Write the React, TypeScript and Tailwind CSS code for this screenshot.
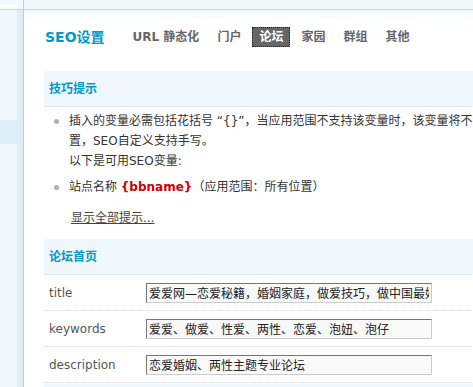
const font = "font-['DejaVu_Sans','Noto_Sans_CJK_SC',sans-serif]";

const tabs = ["URL 静态化", "门户", "论坛", "家园", "群组", "其他"];

const rows = [
  { label: "title", value: "爱爱网—恋爱秘籍，婚姻家庭，做爱技巧，做中国最好的两性网站" },
  { label: "keywords", value: "爱爱、做爱、性爱、两性、恋爱、泡妞、泡仔" },
  { label: "description", value: "恋爱婚姻、两性主题专业论坛" },
];

function Sidebar() {
  return (
    <div className="w-[24px] shrink-0 flex flex-col border-r border-[#b7d2df]">
      <div className="h-[10px] border-b border-[#c5dbe8] bg-[#f2f9fd] flex flex-col">
        <div className="h-[5px]" />
        <div className="h-[2px] w-[17px] bg-white" />
      </div>
      <div className="flex-1 flex">
        <div className="w-[17px] bg-[#f2f9fd] flex flex-col">
          <div className="h-[110px]" />
          <div className="h-[24px] bg-[#ddeef9]" />
        </div>
        <div className="flex-1 bg-[#ddeef9]" />
      </div>
    </div>
  );
}

function SectionHeader({ title }: { title: string }) {
  return (
    <div className="h-[36px] pl-[5px] flex items-center bg-[#f0f7fd] border-b border-dotted border-[#c5dde9]">
      <span className="text-[12px] font-bold text-[#0099cc]">{title}</span>
    </div>
  );
}

export default function App() {
  return (
    <div className={`w-[473px] h-[387px] overflow-hidden flex bg-white text-[#333] ${font}`}>
      <Sidebar />
      <div className="flex-1 min-w-0 overflow-hidden">
        <div className="h-[10px] bg-[#f2f9fd] border-b border-[#c5dbe8] overflow-hidden">
          <div className="-mt-[14px] pl-[10px] text-[12px] leading-[17px] whitespace-nowrap flex gap-[40px]">
            <span>首页 &nbsp;设置</span>
            <span>全局 <span className="text-[#2366a8]">[+]</span></span>
          </div>
        </div>
        <div className="bg-gradient-to-b from-[#f2f9fd] to-white h-[10px] -mb-[10px]" />
        <div className="pl-[20px] pt-[17px]">
          <div className="flex items-center h-[20px] whitespace-nowrap">
            <h3 className="text-[14px] font-bold text-[#0099cc] leading-[20px] mr-[21px] ml-[1px]">SEO设置</h3>
            <div className="flex gap-[4px]">
              {tabs.map((t) => (
                <span
                  key={t}
                  className={
                    "px-[7px] h-[20px] leading-[20px] text-[12px] font-bold " +
                    (t === "论坛"
                      ? "bg-[#666] text-white outline outline-1 outline-dotted outline-[#222] -outline-offset-1"
                      : "text-[#666]")
                  }
                >
                  {t}
                </span>
              ))}
            </div>
          </div>

          <div className="w-[700px] mt-[24px]">
            <SectionHeader title="技巧提示" />
            <ul className="pt-[4px] text-[12px] leading-[20px] whitespace-nowrap">
              <li className="flex pl-[10px]">
                <span className="w-[5px] h-[5px] rounded-full bg-[#b0b0b0] mt-[8px] mr-[10px] shrink-0" />
                <div>
                  插入的变量必需包括花括号 “{"{}"}”，当应用范围不支持该变量时，该变量将不会显示在任何位
                  <br />
                  置，SEO自定义支持手写。
                  <br />
                  以下是可用SEO变量:
                </div>
              </li>
              <li className="flex pl-[10px] mt-[6px]">
                <span className="w-[5px] h-[5px] rounded-full bg-[#b0b0b0] mt-[8px] mr-[10px] shrink-0" />
                <div>
                  站点名称 <span className="font-bold text-[#cc0000]">{"{bbname}"}</span>（应用范围：所有位置）
                </div>
              </li>
              <li className="pl-[27px] mt-[11px]">
                <a className="underline text-[#444]">显示全部提示...</a>
              </li>
            </ul>

            <div className="mt-[11px]">
              <SectionHeader title="论坛首页" />
              {rows.map((r) => (
                <div key={r.label} className="h-[36px] flex items-center border-b border-dotted border-[#c9e0ee]">
                  <span className="w-[102px] pl-[5px] text-[12px] text-[#555]">{r.label}</span>
                  <input
                    readOnly
                    value={r.value}
                    className="w-[286px] h-[20px] px-[2px] text-[12px] text-[#222] bg-[#f9f9f9] border border-t-[#777] border-l-[#777] border-b-[#ccc] border-r-[#ccc] outline-none"
                  />
                </div>
              ))}
              <SectionHeader title="论坛版块" />
            </div>
          </div>
        </div>
      </div>
    </div>
  );
}
